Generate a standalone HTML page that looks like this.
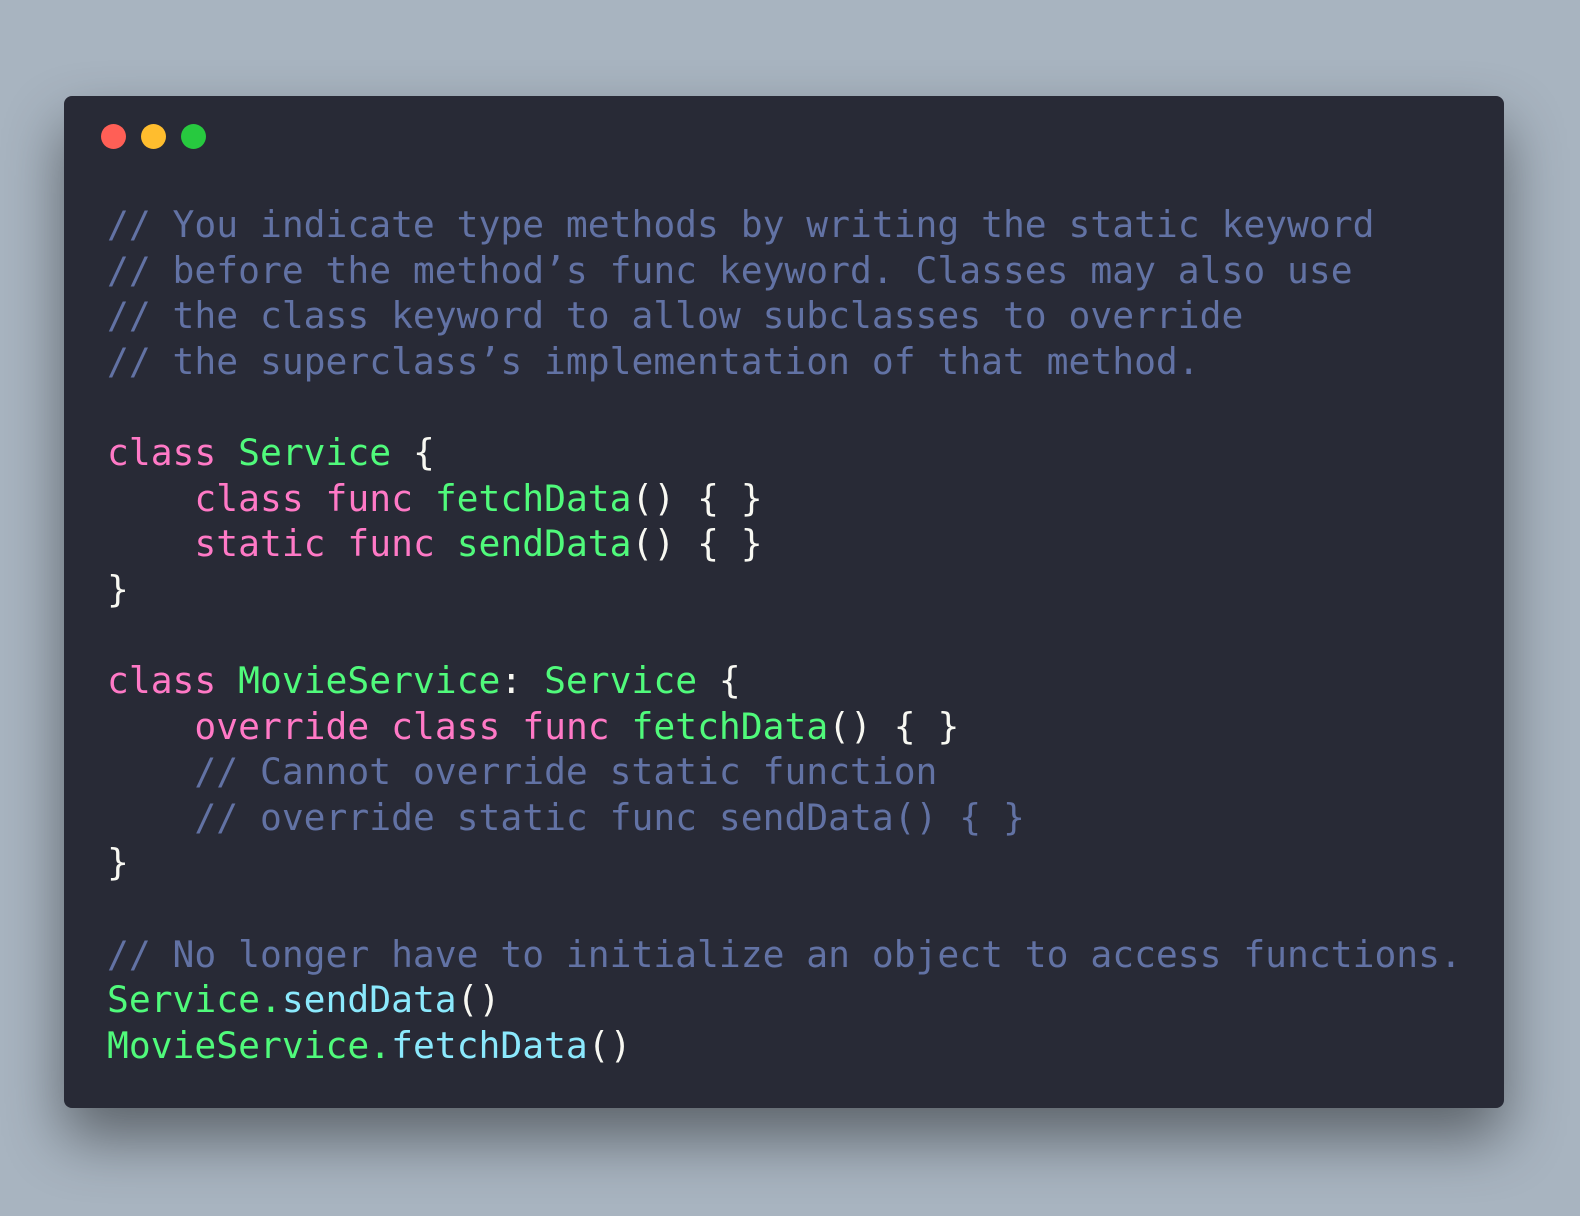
<!DOCTYPE html>
<html><head><meta charset="utf-8"><style>
html,body{margin:0;padding:0;}
body{width:1580px;height:1216px;background:#a8b4c0;position:relative;overflow:hidden;}
.win{position:absolute;left:64px;top:96px;width:1440px;height:1012px;background:#282a36;border-radius:8px;box-shadow:0 30px 60px rgba(0,0,0,0.45);}
.dot{position:absolute;top:124px;width:25px;height:25px;border-radius:50%;}
pre{position:absolute;left:107px;top:202px;margin:0;font-family:"DejaVu Sans Mono","Liberation Mono",monospace;font-size:36.3px;line-height:45.6px;color:#f8f8f2;}
.c{color:#6272a4}.k{color:#ff79c6}.g{color:#50fa7b}.b{color:#8be9fd}
</style></head><body>
<div class="win"></div>
<div class="dot" style="left:101px;background:#ff5f56"></div>
<div class="dot" style="left:141px;background:#ffbd2e"></div>
<div class="dot" style="left:181px;background:#27c93f"></div>
<pre><span class="c">// You indicate type methods by writing the static keyword
// before the method’s func keyword. Classes may also use
// the class keyword to allow subclasses to override
// the superclass’s implementation of that method.</span>

<span class="k">class</span> <span class="g">Service</span> {
    <span class="k">class</span> <span class="k">func</span> <span class="g">fetchData</span>() { }
    <span class="k">static</span> <span class="k">func</span> <span class="g">sendData</span>() { }
}

<span class="k">class</span> <span class="g">MovieService</span>: <span class="g">Service</span> {
    <span class="k">override</span> <span class="k">class</span> <span class="k">func</span> <span class="g">fetchData</span>() { }
    <span class="c">// Cannot override static function</span>
    <span class="c">// override static func sendData() { }</span>
}

<span class="c">// No longer have to initialize an object to access functions.</span>
<span class="g">Service</span><span class="g">.</span><span class="b">sendData</span>()
<span class="g">MovieService</span><span class="g">.</span><span class="b">fetchData</span>()</pre>
</body></html>
